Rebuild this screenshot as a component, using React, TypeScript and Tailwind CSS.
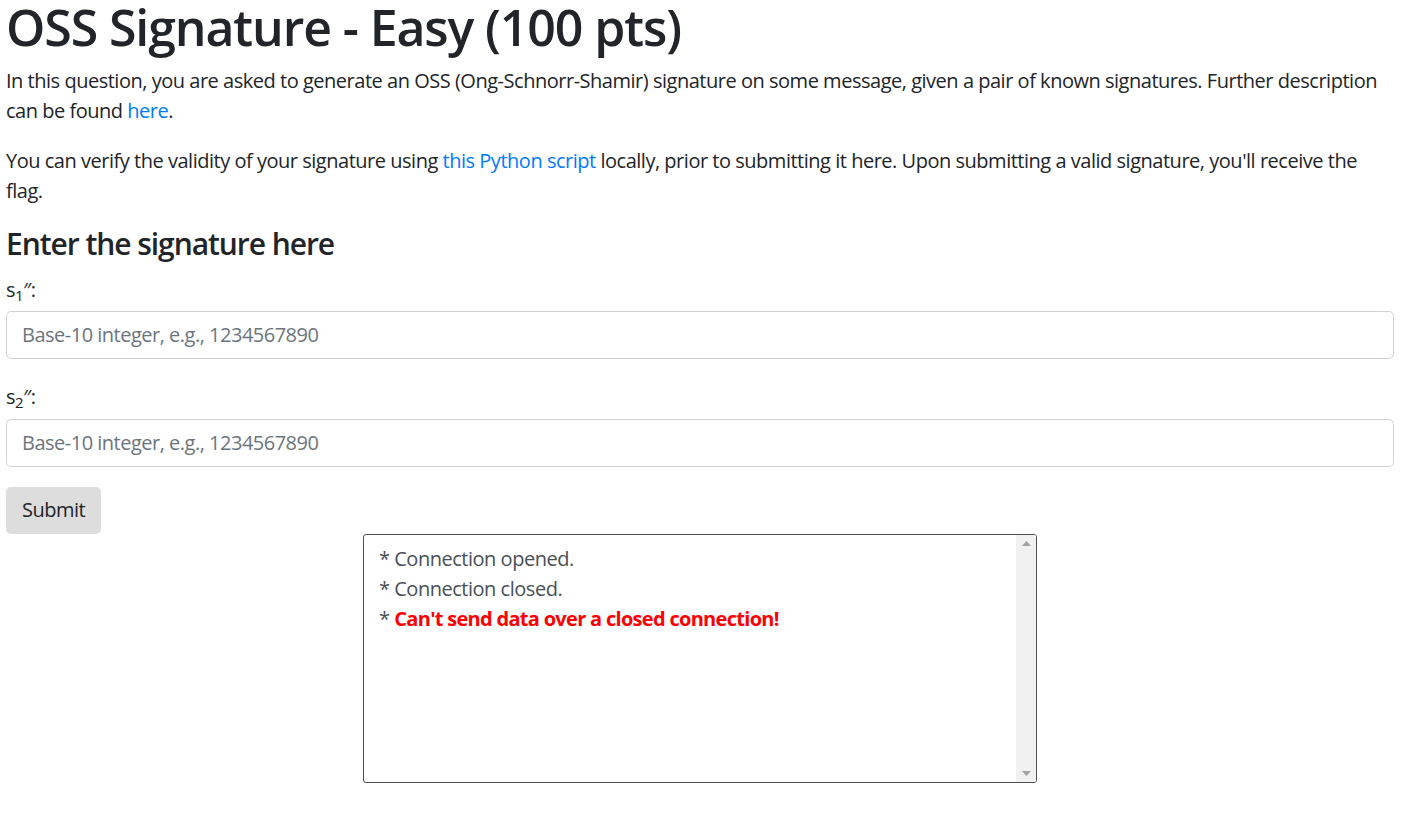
const FONT = "font-['Open_Sans','Noto_Sans',sans-serif]";

const Field: React.FC<{ idx: string; gap: string }> = ({ idx, gap }) => (
    <div className={gap}>
        <label className="block h-[30px] leading-[30px] text-[20px] text-[#212529]">
            s<sub className="text-[15px]">{idx}</sub>″:
        </label>
    </div>
);

const Input: React.FC<{ gap: string }> = ({ gap }) => (
    <input
        type="text"
        placeholder="Base-10 integer, e.g., 1234567890"
        className={`${gap} block w-full h-[47.5px] rounded-[5px] border border-[#ced4da] bg-white px-[15px] text-[20px] tracking-[-0.025em] text-[#495057] placeholder:text-[#6c757d] outline-none`}
    />
);

const Console: React.FC = () => (
    <div className="mx-auto flex h-[249px] w-[674px] overflow-hidden rounded-[3px] border border-[#505050] bg-white">
        <div className="flex-1 pl-[15px] pt-[9px] text-[20px] leading-[30px] text-[#495057]">
            <div>* Connection opened.</div>
            <div>* Connection closed.</div>
            <div>
                * <span className="font-bold tracking-[-0.035em] text-[#ff0000]">Can't send data over a closed connection!</span>
            </div>
        </div>
        <div className="flex w-[20px] flex-col items-center justify-between bg-[#f1f1f1] py-[6px]">
            <svg width="9" height="5" viewBox="0 0 9 5">
                <polygon points="0,5 4.5,0 9,5" fill="#a3a3a3" />
            </svg>
            <svg width="9" height="5" viewBox="0 0 9 5">
                <polygon points="0,0 9,0 4.5,5" fill="#a3a3a3" />
            </svg>
        </div>
    </div>
);

export default function App() {
    return (
        <div className={`${FONT} min-h-screen bg-white pl-[6px] pr-[8px] tracking-[-0.03em] text-[#212529]`}>
            <h1 className="mb-[12px] text-[50px] font-semibold leading-[54px] tracking-[-0.022em]">
                OSS Signature - Easy (100 pts)
            </h1>
            <p className="mb-[20px] text-[20px] leading-[30px]">
                In this question, you are asked to generate an OSS (Ong-Schnorr-Shamir) signature on some
                message, given a pair of known signatures. Further description can be found{" "}
                <a href="#" className="text-[#007bff]">here</a>.
            </p>
            <p className="mb-[20px] text-[20px] leading-[30px]">
                You can verify the validity of your signature using{" "}
                <a href="#" className="text-[#007bff]">this Python script</a> locally, prior to submitting
                it here. Upon submitting a valid signature, you'll receive the flag.
            </p>
            <h4 className="mb-[13px] text-[30px] font-semibold leading-[36px] tracking-[-0.035em]">
                Enter the signature here
            </h4>
            <Field idx="1" gap="mb-[6px]" />
            <Input gap="mb-[23.5px]" />
            <Field idx="2" gap="mb-[7px]" />
            <Input gap="mb-[20px]" />
            <button className="block h-[47.5px] rounded-[5px] bg-[#dddddd] px-[16px] text-[20px] tracking-[-0.025em] text-[#212529]">
                Submit
            </button>
            <Console />
        </div>
    );
}
